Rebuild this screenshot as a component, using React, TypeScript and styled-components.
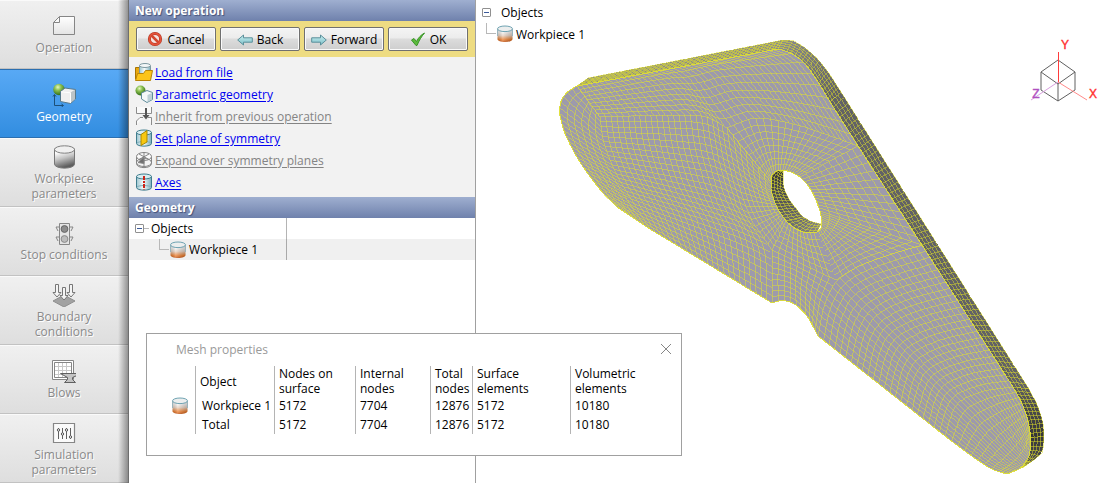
import React from "react";
import styled, { createGlobalStyle, css } from "styled-components";

const Global = createGlobalStyle`
  *, *::before, *::after { box-sizing: border-box; }
  body { margin: 0; background: #fff; color: #000; }
  body, button, table { font-family: "Open Sans", "Noto Sans", sans-serif; font-size: 12px; line-height: 15px; }
`;

/* ---------- geometry of the finite element plate ---------- */

type P = [number, number];

const smooth = (pts: P[], rounds = 2): P[] => {
  let cur = pts;
  for (let r = 0; r < rounds && cur.length > 2; r++) {
    const next: P[] = [cur[0]];
    for (let i = 0; i < cur.length - 1; i++) {
      const [a, b] = [cur[i], cur[i + 1]];
      if (i > 0) next.push([a[0] * 0.8 + b[0] * 0.2, a[1] * 0.8 + b[1] * 0.2]);
      if (i < cur.length - 2) next.push([a[0] * 0.2 + b[0] * 0.8, a[1] * 0.2 + b[1] * 0.8]);
    }
    next.push(cur[cur.length - 1]);
    cur = next;
  }
  return cur;
};

const sample = (pts: P[], n: number): P[] => {
  const s = smooth(pts);
  const acc = [0];
  for (let i = 1; i < s.length; i++) acc.push(acc[i - 1] + Math.hypot(s[i][0] - s[i - 1][0], s[i][1] - s[i - 1][1]));
  const total = acc[acc.length - 1];
  const out: P[] = [];
  let k = 1;
  for (let i = 0; i <= n; i++) {
    const d = (total * i) / n;
    while (k < s.length - 1 && acc[k] < d) k++;
    const t = (d - acc[k - 1]) / (acc[k] - acc[k - 1] || 1);
    out.push([s[k - 1][0] + (s[k][0] - s[k - 1][0]) * t, s[k - 1][1] + (s[k][1] - s[k - 1][1]) * t]);
  }
  return out;
};

const toPath = (pts: P[]) => "M" + pts.map((p) => p[0].toFixed(1) + " " + p[1].toFixed(1)).join("L");

/* Transfinite patch: top and bottom run left to right, left and right run downwards. */
const patch = (top: P[], bottom: P[], left: P[], right: P[], nu: number, nv: number): string => {
  const t = sample(top, nu), b = sample(bottom, nu), l = sample(left, nv), r = sample(right, nv);
  const grid: P[][] = [];
  for (let j = 0; j <= nv; j++) {
    const v = j / nv;
    const row: P[] = [];
    for (let i = 0; i <= nu; i++) {
      const u = i / nu;
      const at = (k: 0 | 1) =>
        (1 - v) * t[i][k] + v * b[i][k] + (1 - u) * l[j][k] + u * r[j][k] -
        ((1 - u) * (1 - v) * t[0][k] + u * (1 - v) * t[nu][k] + (1 - u) * v * b[0][k] + u * v * b[nu][k]);
      row.push([at(0), at(1)]);
    }
    grid.push(row);
  }
  let d = "";
  for (let j = 0; j < nv; j++) d += toPath(grid[j]);
  for (let i = 0; i < nu; i++) d += toPath(grid.map((row) => row[i]));
  return d;
};

const topEdge: P[] = [[577, 86], [680, 67], [778, 49]];
const cornerEdge: P[] = [[778, 49], [789, 52], [799, 58], [808, 67], [820, 85], [830, 102], [858, 146]];
const rightEdge: P[] = [[858, 146], [922, 245]];
const legEdge: P[] = [[922, 245], [1013, 387]];
const capRight: P[] = [[1013, 387], [1022, 403], [1028, 420], [1031, 438]];
const capTip: P[] = [[1031, 438], [1030, 455], [1022, 468], [1007, 474]];
const capBottom: P[] = [[945, 436], [977, 460], [993, 470], [1007, 474]];
const legBottom: P[] = [[818, 336], [945, 436]];
const notch: P[] = [[772, 303], [782, 300], [794, 303], [807, 315], [818, 336]];
const lowerLeft: P[] = [[650, 229], [772, 303]];
const lobeBottom: P[] = [[617, 207], [650, 229]];
const lobe: P[] = [[577, 86], [567, 92], [561, 100], [559, 113], [565, 135], [580, 163], [600, 190], [617, 207]];

const hTL: P = [771, 182], hTR: P = [800, 177], hR: P = [820, 211], hBR: P = [817, 232], hBL: P = [786, 221];
const holeTop: P[] = [hTL, [771, 176], [776, 171], [783, 170], [792, 172], hTR];
const holeRight: P[] = [hTR, [808, 185], [815, 197], hR];
const holeBR: P[] = [hR, [822, 222], [821, 229], hBR];
const holeBottom: P[] = [hBL, [794, 228], [805, 233], hBR];
const holeLeft: P[] = [hTL, [771, 192], [777, 208], hBL];

const knot: P = [836, 280];
const midLeft: P[] = [[600, 117], [660, 115], [705, 115], [727, 128]];
const midRight: P[] = [[727, 128], [755, 116], [800, 125], [858, 146]];
const focusLine: P[] = [[600, 117], [603, 142], [616, 175], [650, 229]];
const ringLeft: P[] = [[727, 128], [733, 165], [748, 215], [772, 250]];
const ringBottom: P[] = [[772, 250], [802, 264], knot];
const ringBR: P[] = [[922, 245], [888, 255], [858, 266], knot];
const belowRing: P[] = [knot, [824, 304], [818, 336]];
const legStart: P[] = [...ringBR, ...belowRing.slice(1)];
const legEnd: P[] = [[1013, 387], [985, 390], [955, 402], [945, 436]];
const rev = (p: P[]): P[] => [...p].reverse();

const mesh = [
  patch(topEdge.concat(), [...midLeft, ...midRight.slice(1)], [[577, 86], [600, 117]], cornerEdge, 44, 9),
  patch([[577, 86], [600, 117]], lobeBottom, lobe, focusLine, 6, 25),
  patch(midLeft, lowerLeft, focusLine, [...ringLeft, [772, 303]], 23, 25),
  patch(midRight, holeTop, [[727, 128], hTL], [[858, 146], hTR], 18, 8),
  patch(rightEdge, holeRight, [[858, 146], hTR], [[922, 245], hR], 12, 10),
  patch(ringBR, holeBR, [[922, 245], hR], [knot, hBR], 12, 10),
  patch(ringLeft, holeLeft, [[727, 128], hTL], [[772, 250], hBL], 18, 7),
  patch(holeBottom, ringBottom, [hBL, [772, 250]], [hBR, knot], 10, 6),
  patch(ringBottom, notch, [[772, 250], [772, 303]], belowRing, 10, 9),
  patch(legEdge, legBottom, legStart, legEnd, 23, 24),
  patch(capRight, capBottom, legEnd, capTip, 9, 24),
].join("");

const facePts: P[] = [
  ...smooth(topEdge), ...smooth(cornerEdge), ...rightEdge, ...legEdge, ...smooth(capRight), ...smooth(capTip),
  ...rev(smooth(capBottom)), ...rev(legBottom), ...rev(smooth(notch)), ...rev(lowerLeft), ...rev(lobeBottom), ...rev(smooth(lobe)),
];
const holePts: P[] = [
  ...smooth(holeTop), ...smooth(holeRight), ...smooth(holeBR), ...rev(smooth(holeBottom)), ...rev(smooth(holeLeft)),
];
const facePath = toPath(facePts) + "Z" + toPath(holePts) + "Z";

interface Band { inner: P[]; outer: P[]; n: number; layers: number; from: number; to: number }

const bands: Band[] = [
  { inner: [[577, 86], [778, 49]], outer: [[588, 78], [783, 40]], n: 62, layers: 5, from: 138, to: 138 },
  { inner: cornerEdge.slice(0, 6), outer: [[783, 40], [791, 40], [803, 46], [817, 58], [829, 73], [841, 92]], n: 17, layers: 5, from: 138, to: 95 },
  { inner: [[830, 102], [1013, 387]], outer: [[841, 92], [1029, 389]], n: 56, layers: 4, from: 98, to: 98 },
  { inner: capRight, outer: [[1029, 389], [1038, 406], [1043, 422], [1044, 436]], n: 12, layers: 4, from: 90, to: 50 },
  { inner: capTip.slice(0, 3), outer: [[1044, 436], [1043, 451], [1037, 458], [1022, 468]], n: 8, layers: 4, from: 55, to: 95 },
  { inner: [...rev(holeLeft), ...holeTop.slice(1, 4)].reverse(), outer: [[783, 170], [783, 186], [789, 200], [803, 217]], n: 18, layers: 4, from: 52, to: 108 },
  { inner: holeBottom, outer: [[803, 217], [812, 222], [821, 224]], n: 8, layers: 4, from: 108, to: 135 },
];

const Rim = ({ band }: { band: Band }) => {
  const a = sample(band.inner, band.n);
  const b = sample(band.outer, band.n);
  let lines = "";
  for (let i = 0; i <= band.n; i++) lines += toPath([a[i], b[i]]);
  for (let k = 0; k <= band.layers; k++) {
    const t = k / band.layers;
    lines += toPath(a.map((p, i): P => [p[0] + (b[i][0] - p[0]) * t, p[1] + (b[i][1] - p[1]) * t]));
  }
  return (
    <g>
      {a.slice(0, -1).map((p, i) => {
        const c = Math.round(band.from + ((band.to - band.from) * i) / band.n);
        return <path key={i} d={toPath([p, a[i + 1], b[i + 1], b[i]]) + "Z"} fill={`rgb(${c},${c},${c + 4})`} />;
      })}
      <path d={lines} fill="none" stroke="#dede28" strokeOpacity="0.62" strokeWidth="0.8" />
    </g>
  );
};

const SceneSvg = styled.svg`
  display: block;
  width: 100%;
  height: auto;
`;

const Scene = () => (
  <SceneSvg viewBox="476 0 642 483" role="img" aria-label="Workpiece 1 mesh">
    <g shapeRendering="crispEdges">
      {bands.map((band, i) => <Rim key={i} band={band} />)}
      <path d={facePath} fill="#9d9aac" fillRule="evenodd" />
      <path d={mesh} fill="none" stroke="#dede34" strokeOpacity="0.75" strokeWidth="0.7" />
      <path d={facePath} fill="none" stroke="#dede34" strokeOpacity="0.9" />
    </g>
    <g fill="none" stroke="#606060">
      <path d="M1058 60L1041 72V90L1058 101L1075 90V72ZM1041 72L1058 84L1075 72M1058 84V101" />
      <path d="M1058.500 52V82" stroke="#ff3c3c" />
      <path d="M1058 82L1087 100" stroke="#ff8a8a" />
      <path d="M1058 82L1031 100" stroke="#d8a0e0" />
    </g>
    <g fontFamily="Liberation Sans, sans-serif" fontSize="12" textAnchor="middle" strokeWidth="0.400">
      <text x="1065" y="49" fill="#ff3030" stroke="#ff3030">Y</text>
      <text x="1093" y="98" fill="#ff3030" stroke="#ff3030">X</text>
      <text x="1036" y="98" fill="#b050c0" stroke="#b050c0">Z</text>
    </g>
  </SceneSvg>
);

/* ---------- icons ---------- */

const Icon = styled.svg<{ $size?: number }>`
  display: block;
  flex: none;
  width: ${(p) => p.$size ?? 18}px;
  height: ${(p) => p.$size ?? 18}px;
`;

const Gradients = styled.svg`
  position: absolute;
  width: 0;
  height: 0;
`;

const Defs = () => (
  <Gradients aria-hidden="true">
    <defs>
      <linearGradient id="hot" x1="0" y1="0" x2="0" y2="1">
        <stop offset="0.25" stopColor="#f4f4f4" /><stop offset="0.5" stopColor="#e8d2c2" />
        <stop offset="0.8" stopColor="#ee8030" /><stop offset="1" stopColor="#c4500c" />
      </linearGradient>
      <linearGradient id="shade" x1="0" x2="1">
        <stop offset="0" stopColor="#000" stopOpacity="0.16" /><stop offset="0.35" stopColor="#fff" stopOpacity="0.25" />
        <stop offset="1" stopColor="#000" stopOpacity="0.2" />
      </linearGradient>
      <linearGradient id="grey" x1="0" y1="0" x2="0.3" y2="1">
        <stop offset="0.2" stopColor="#fff" /><stop offset="0.55" stopColor="#c4c4c4" /><stop offset="1" stopColor="#5e5e5e" />
      </linearGradient>
      <linearGradient id="glass" x1="0" x2="1">
        <stop offset="0" stopColor="#9cc6d0" /><stop offset="0.45" stopColor="#f4fafb" /><stop offset="1" stopColor="#7fb0bd" />
      </linearGradient>
      <radialGradient id="ball" cx="0.4" cy="0.3" r="0.7">
        <stop offset="0" stopColor="#e6f6c0" /><stop offset="0.4" stopColor="#8cc152" /><stop offset="1" stopColor="#2f6b14" />
      </radialGradient>
      <linearGradient id="arrow" x1="0" y1="0" x2="0" y2="1">
        <stop offset="0" stopColor="#c8eef0" /><stop offset="1" stopColor="#7cc0c8" />
      </linearGradient>
      <linearGradient id="paper" x1="0" y1="0" x2="0" y2="1">
        <stop offset="0" stopColor="#fff" /><stop offset="1" stopColor="#e4e4e4" />
      </linearGradient>
    </defs>
  </Gradients>
);

const WorkpieceIcon = () => (
  <Icon viewBox="0 0 18 18">
    <path d="M1.500 4V14C1.500 18 16.500 18 16.500 14V4Z" fill="url(#hot)" />
    <path d="M1.500 4V14C1.500 18 16.500 18 16.500 14V4Z" fill="url(#shade)" />
    <path d="M1.500 11V4M16.500 11V4" stroke="#9ab4bc" />
    <ellipse cx="9" cy="3.800" rx="7.500" ry="2.800" fill="#eceeee" stroke="#6fa3b2" />
  </Icon>
);

const NavIcon = ({ name }: { name: string }) => (
  <Icon viewBox="0 0 24 24" $size={24} fill="none" stroke="#868686">
    {name === "operation" && <path d="M7.500 2.500H22.500V20.500H1.500V8.500ZM7.500 2.500V8.500H1.500" fill="url(#paper)" />}
    {name === "geometry" && (
      <>
        <path d="M2.500 12V22.500H11M1 13.500L2.500 11.500L4 13.500M9.500 21L11.500 22.500L9.500 24" stroke="#1c4f78" />
        <circle cx="7" cy="6.500" r="5.800" fill="url(#ball)" stroke="none" />
        <path d="M8.500 8.500L13 5L23.500 6.500V16L18.500 20.500L8.500 18.500Z" fill="#f0f0f0" stroke="#58798a" />
        <path d="M18.500 9.500L23 6.800V16L18.500 20Z" fill="#bcc4c8" stroke="none" />
        <path d="M9 8.800L18.500 9.800V20" stroke="#fff" />
      </>
    )}
    {name === "workpiece" && (
      <>
        <path d="M2.500 4V19C2.500 24.500 22.500 24.500 22.500 19V4Z" fill="url(#grey)" stroke="#777" />
        <ellipse cx="12.500" cy="4.500" rx="10" ry="3.700" fill="#f0f0f0" stroke="#808080" />
      </>
    )}
    {name === "stop" && (
      <>
        <path d="M7.500 2.500H17.500V23.500H7.500Z" fill="#e4e4e4" />
        <path d="M7 6H4L6 10M18 6H21L19 10M7 16H4L6 20M18 16H21L19 20" />
        <circle cx="12.500" cy="8" r="3.400" fill="#8c8c8c" stroke="#666" />
        <circle cx="12.500" cy="18" r="3.400" fill="#bcbcbc" stroke="#8a8a8a" />
      </>
    )}
    {name === "boundary" && (
      <>
        <path d="M1 18L12 12L23 18L12 24Z" fill="#a2a2a2" stroke="#8e8e8e" />
        <g fill="#f4f4f4" stroke="#777">
          <path d="M3.500 1.500H6.500V9.500H9L5 14L1 9.500H3.500Z" />
          <path d="M17.500 1.500H20.500V9.500H23L19 14L15 9.500H17.500Z" />
          <path d="M10.500 4.500H13.500V12.500H16L12 17L8 12.500H10.500Z" />
        </g>
      </>
    )}
    {name === "blows" && (
      <>
        <path d="M0.500 1.500H21.500V20.500H0.500Z" fill="#fff" />
        <path d="M2.500 3.500H19.500V18.500H2.500Z" />
        <path d="M3 7.500H19M3 11.500H19M3 15.500H19M6.500 4V18M10.500 4V18M14.500 4V18" stroke="#c8c8c8" />
        <path d="M8.500 14.500H25V16.500L20.500 18.500V20.500L23.500 23.500H12.500L15.500 20.500V18.500Z" fill="#c4c4c4" stroke="#606060" />
      </>
    )}
    {name === "simulation" && (
      <>
        <path d="M1.500 2.500H22.500V21.500H1.500Z" fill="#fafafa" strokeWidth="1.200" />
        <path d="M6.500 7V18M10.500 7V18M14.500 7V18M18.500 7V18" stroke="#606060" />
        <g fill="#fff" stroke="#505050"><circle cx="6.500" cy="9" r="1.200" /><circle cx="10.500" cy="13" r="1.200" /><circle cx="14.500" cy="9" r="1.200" /><circle cx="18.500" cy="16" r="1.200" /></g>
      </>
    )}
  </Icon>
);

const ToolIcon = ({ name }: { name: string }) => (
  <Icon viewBox="0 0 16 16" $size={16} fill="none">
    {name === "cancel" && (
      <>
        <circle cx="8" cy="8" r="5.600" fill="#f4e4e0" stroke="#a83420" strokeWidth="3" />
        <circle cx="8" cy="8" r="5.600" stroke="#e4523a" strokeWidth="2" />
        <path d="M4.500 4.500L11.500 11.500" stroke="#d44830" strokeWidth="2.500" />
      </>
    )}
    {name === "back" && <path d="M0.700 9L6.500 4V6.800H15.300V11.200H6.500V14Z" fill="url(#arrow)" stroke="#5b8f9a" />}
    {name === "forward" && <path d="M15.300 9L9.500 4V6.800H0.700V11.200H9.500V14Z" fill="url(#arrow)" stroke="#5b8f9a" />}
    {name === "ok" && <path d="M1.500 9L4 7.500L6.500 10.500C8.500 6.500 11 4 14.500 2C11.500 5.500 9 9.500 7 14.500H6Z" fill="#5cbb3c" stroke="#3a9428" />}
  </Icon>
);

const LinkIcon = ({ name }: { name: string }) => (
  <Icon viewBox="0 0 18 18" fill="none">
    {name === "load" && (
      <>
        <path d="M0.500 4.500H5V16H0.500Z" fill="#e8a810" stroke="#a87400" />
        <path d="M4.500 3V12H15.500V3Z" fill="url(#glass)" />
        <path d="M4.500 10V3M15.500 8V3" stroke="#7e98a0" />
        <ellipse cx="10" cy="2.500" rx="5.500" ry="2" fill="#f2f6f7" stroke="#7e98a0" />
        <path d="M0.500 17.500L2.500 10.500H8.500L10.500 7.500H17.500L15.500 17.500Z" fill="#fcc419" stroke="#b88408" />
      </>
    )}
    {name === "parametric" && (
      <>
        <circle cx="5.500" cy="5.500" r="5" fill="url(#ball)" />
        <path d="M6.500 8L12 5.500L17.500 7.500V14.500L12 17.500L6.500 14Z" fill="#f4f8f9" stroke="#5f8c9a" />
        <path d="M12.500 10L17 8V14.300L12.500 17Z" fill="#bcd0d6" />
      </>
    )}
    {name === "inherit" && (
      <>
        <path d="M1.500 0V6.500H16.500V0M1.500 18V14L5 10.500H8M16.500 18V10.500H13" fill="#fafafa" stroke="#8c8c8c" />
        <path d="M11 1V8" stroke="#555" strokeWidth="2" /><path d="M7.500 8H14.500L11 12.500Z" fill="#555" />
      </>
    )}
    {(name === "plane" || name === "axes") && (
      <>
        <path d="M1.500 3.500V14.500C1.500 18 16.500 18 16.500 14.500V3.500Z" fill="url(#glass)" stroke="#3f7d8e" />
        <ellipse cx="9" cy="3.500" rx="7.500" ry="2.500" fill="#d8ecf0" stroke="#3f7d8e" />
        <path d="M2 14C4 12 14 12 16 14" stroke="#80b0bc" />
        {name === "plane" ? <path d="M6 5.500L12 1.500V13L6 16.500Z" fill="#f8c810" stroke="#a88800" />
          : <path d="M9 3V16.500" stroke="#cc2418" strokeWidth="2" strokeDasharray="4 1 2 1" />}
      </>
    )}
    {name === "expand" && (
      <g stroke="#858585">
        <path d="M1.500 5.500V12.500C1.500 18 16.500 18 16.500 12.500V5.500" fill="#f4f4f4" />
        <ellipse cx="9" cy="5.500" rx="7.500" ry="4" fill="#fafafa" /><ellipse cx="9" cy="11.500" rx="7.500" ry="4" />
        <path d="M9 1V17M4 3L14 8.500M14 3L4 8.500" /><path d="M3 11.500L9 6V12.500Z" fill="#707070" />
      </g>
    )}
  </Icon>
);

/* ---------- layout ---------- */

const Layout = styled.div`
  position: relative;
  display: flex;
  min-height: 100vh;
`;

const Sidebar = styled.nav`
  position: relative;
  flex: none;
  width: 129px;
  background: #e6e6e6;
  border-right: 1px solid #6e6e6e;
  &::after {
    content: "";
    position: absolute;
    inset: 0 0 0 auto;
    width: 10px;
    background: linear-gradient(90deg, rgba(0, 0, 0, 0), rgba(0, 0, 0, 0.38));
    pointer-events: none;
  }
`;

const NavButton = styled.button<{ $active?: boolean }>`
  display: flex;
  flex-direction: column;
  align-items: center;
  justify-content: center;
  gap: 2px;
  width: 100%;
  height: 69px;
  padding: 0 22px;
  border: 0;
  border-top: 1px solid #fafafa;
  border-bottom: 1px solid #c2c2c2;
  background: linear-gradient(#f0f0f0, #dedede);
  color: #8a8a8a;
  text-shadow: 1px 1px 0 #fff;
  ${(p) => p.$active && css`
    background: linear-gradient(#58a9f5, #328de0);
    border-color: #2c6fb0;
    color: #fff;
    text-shadow: none;
  `}
`;

const NavLabel = styled.span`
  white-space: pre;
`;

const Panel = styled.section`
  flex: none;
  width: 347px;
  border-right: 1px solid #a0a0a0;
`;

const PanelTitle = styled.h2`
  height: 21px;
  margin: 0;
  padding: 3px 6px;
  font-size: 12px;
  line-height: 15px;
  font-weight: 700;
  color: #fff;
  text-shadow: 1px 1px 1px #43527a;
  background: linear-gradient(#9fafd0, #6f81ac);
`;

const Toolbar = styled.div`
  display: flex;
  gap: 4px;
  padding: 6px 7px;
  background: #eedc82;
`;

const ToolButton = styled.button`
  display: flex;
  flex: 1;
  align-items: center;
  justify-content: center;
  gap: 4px;
  height: 24px;
  padding: 0;
  border: 1px solid #707070;
  border-radius: 2px;
  background: linear-gradient(#f4f4f4, #ececec 45%, #dcdcdc 50%, #cecece);
  box-shadow: inset 0 0 0 1px #fafafa;
  color: #000;
`;

const Links = styled.ul`
  margin: 0;
  padding: 4px 6px;
  list-style: none;
  background: #f2f2f2;
`;

const LinkRow = styled.li`
  display: flex;
  align-items: center;
  gap: 2px;
  height: 22px;
`;

const ActionLink = styled.a<{ $muted?: boolean }>`
  color: ${(p) => (p.$muted ? "#848484" : "#0000f0")};
  text-decoration: underline;
  text-underline-offset: 2px;
`;

const Tree = styled.div<{ $columns?: boolean }>`
  ${(p) => p.$columns && css`
    background: linear-gradient(#b4b4b4, #b4b4b4) 157px 0 / 1px 100% no-repeat;
  `}
`;

const TreeRow = styled.div<{ $height: number; $shaded?: boolean }>`
  display: flex;
  align-items: center;
  height: ${(p) => p.$height}px;
  padding-left: 6px;
  white-space: pre;
  ${(p) => p.$shaded && css`background: rgba(0, 0, 0, 0.06);`}
`;

const Toggle = styled.button`
  position: relative;
  flex: none;
  width: 9px;
  height: 9px;
  padding: 0;
  border: 1px solid #909090;
  border-radius: 1px;
  background: #fff;
  &::after {
    content: "";
    position: absolute;
    inset: 3px 1px;
    background: #3a5a9a;
  }
`;

const Stub = styled.span<{ $show?: boolean }>`
  width: ${(p) => (p.$show ? 5 : 8)}px;
  height: 1px;
  background: ${(p) => (p.$show ? "#b8b8b8" : "transparent")};
`;

const Elbow = styled.span<{ $indent: number }>`
  align-self: flex-start;
  width: 10px;
  height: 11px;
  margin-left: ${(p) => p.$indent}px;
  border: solid #b8b8b8;
  border-width: 0 0 1px 1px;
`;

const TreeLabel = styled.span`
  margin-left: 2px;
`;

const Viewport = styled.main`
  position: relative;
  flex: 1;
  min-width: 0;
`;

const SceneTree = styled.div`
  position: absolute;
  top: 1px;
  left: 0;
`;

const Dialog = styled.section`
  position: absolute;
  top: 333px;
  left: 146px;
  width: 536px;
  padding-bottom: 21px;
  border: 1px solid #a0a0a0;
  background: #fff;
`;

const DialogHead = styled.header`
  display: flex;
  align-items: center;
  justify-content: space-between;
  height: 32px;
  padding: 0 8px 2px 29px;
  color: #9a9a9a;
`;

const DialogTitle = styled.h2`
  margin: 0;
  font-size: 12px;
  line-height: 15px;
  font-weight: 400;
`;

const CloseButton = styled.button`
  padding: 0;
  border: 0;
  background: none;
  color: #868686;
`;

const MeshTable = styled.table`
  width: 100%;
  table-layout: fixed;
  border-collapse: separate;
  border-spacing: 0;
`;

const Col = styled.col<{ $w?: number }>`
  ${(p) => p.$w && css`width: ${p.$w}px;`}
`;

const HeadCell = styled.th`
  height: 30px;
  padding: 0 0 0 4px;
  border-left: 1px solid #b4b4b4;
  font-weight: 400;
  text-align: left;
  white-space: pre;
`;

const Cell = styled.td<{ $name?: boolean }>`
  height: 19px;
  padding: 0 0 0 ${(p) => (p.$name ? 6 : 4)}px;
  border-left: 1px solid #b4b4b4;
  white-space: nowrap;
`;

const IconCell = styled.td`
  padding: 0 6px 0 24px;
`;

const nav = [
  ["operation", "Operation"], ["geometry", "Geometry"], ["workpiece", "Workpiece\nparameters"], ["stop", "Stop conditions"],
  ["boundary", "Boundary\nconditions"], ["blows", "Blows"], ["simulation", "Simulation\nparameters"],
];
const tools = [["cancel", "Cancel"], ["back", "Back"], ["forward", "Forward"], ["ok", "OK"]];
const links: [string, string, boolean][] = [
  ["load", "Load from file", false], ["parametric", "Parametric geometry", false], ["inherit", "Inherit from previous operation", true],
  ["plane", "Set plane of symmetry", false], ["expand", "Expand over symmetry planes", true], ["axes", "Axes", false],
];
const heads = ["Object", "Nodes on\nsurface", "Internal\nnodes", "Total\nnodes", "Surface\nelements", "Volumetric\nelements"];
const values = ["5172", "7704", "12876", "5172", "10180"];

const ObjectTree = ({ height, indent, panel }: { height: number; indent: number; panel?: boolean }) => (
  <Tree $columns={panel}>
    <TreeRow $height={height}><Toggle aria-label="Collapse Objects" /><Stub $show={panel} /><TreeLabel>Objects</TreeLabel></TreeRow>
    <TreeRow $height={height} $shaded={panel}><Elbow $indent={indent} /><WorkpieceIcon /><TreeLabel>Workpiece 1</TreeLabel></TreeRow>
  </Tree>
);

export default function App() {
  return (
    <Layout>
      <Global />
      <Defs />
      <Sidebar>
        {nav.map(([name, label]) => (
          <NavButton key={name} $active={name === "geometry"}>
            <NavIcon name={name} />
            <NavLabel>{label}</NavLabel>
          </NavButton>
        ))}
      </Sidebar>
      <Panel>
        <PanelTitle>New operation</PanelTitle>
        <Toolbar>
          {tools.map(([name, label]) => <ToolButton key={name}><ToolIcon name={name} />{label}</ToolButton>)}
        </Toolbar>
        <Links>
          {links.map(([name, label, muted]) => (
            <LinkRow key={name}>
              <LinkIcon name={name} />
              <ActionLink href="#" $muted={muted} aria-disabled={muted}>{label}</ActionLink>
            </LinkRow>
          ))}
        </Links>
        <PanelTitle>Geometry</PanelTitle>
        <ObjectTree height={21} indent={24} panel />
      </Panel>
      <Viewport>
        <Scene />
        <SceneTree><ObjectTree height={22} indent={4} /></SceneTree>
      </Viewport>
      <Dialog role="dialog" aria-labelledby="mesh-title">
        <DialogHead>
          <DialogTitle id="mesh-title">Mesh properties</DialogTitle>
          <CloseButton aria-label="Close">
            <Icon viewBox="0 0 14 14" $size={14} fill="none" stroke="currentColor"><path d="M2 2L12 12M12 2L2 12" /></Icon>
          </CloseButton>
        </DialogHead>
        <MeshTable>
          <colgroup><Col $w={48} /><Col $w={79} /><Col $w={81} /><Col $w={75} /><Col $w={42} /><Col $w={98} /><Col /></colgroup>
          <thead>
            <tr><td />{heads.map((h) => <HeadCell key={h} scope="col">{h}</HeadCell>)}</tr>
          </thead>
          <tbody>
            {["Workpiece 1", "Total"].map((name, r) => (
              <tr key={name}>
                <IconCell>{r === 0 && <WorkpieceIcon />}</IconCell>
                <Cell $name>{name}</Cell>
                {values.map((v, i) => <Cell key={i}>{v}</Cell>)}
              </tr>
            ))}
          </tbody>
        </MeshTable>
      </Dialog>
    </Layout>
  );
}
